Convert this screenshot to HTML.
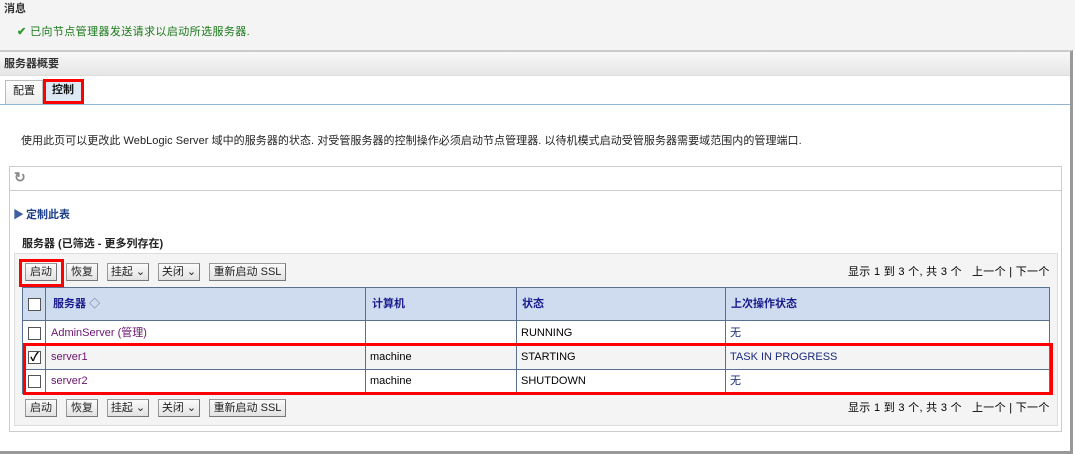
<!DOCTYPE html>
<html><head><meta charset="utf-8"><style>
*{margin:0;padding:0;box-sizing:border-box}
body{width:1075px;height:454px;position:relative;background:#fff;font-family:"Liberation Sans","Noto Sans CJK SC",sans-serif;font-size:11px;line-height:13px;color:#000;overflow:hidden}
.a{position:absolute;white-space:nowrap}
.btn{position:absolute;height:18px;border:1px solid #999;border-right-color:#777;border-bottom-color:#777;background:linear-gradient(#fbfbfb,#e2e2e2);font-size:11px;line-height:16px;text-align:center;color:#222}
.red{position:absolute;border:3px solid #f00}
.th{position:absolute;color:#1a1a8c;font-weight:bold;font-size:11px}
.cb{position:absolute;width:13px;height:13px;border:1px solid #555;background:#fff}
.lnk{color:#6a1470}
.pg{position:absolute;font-size:11px;color:#000;white-space:nowrap;letter-spacing:0.3px}
</style></head><body>
<div class="a" style="left:0;top:0;width:1075px;height:50px;background:#f4f4f4"></div>
<div class="a" style="left:4px;top:3px;color:#333;font-weight:bold">消息</div>
<div class="a" style="left:17px;top:26px;color:#1a7a1a;font-size:11px;letter-spacing:0.4px"><span style="color:#2a9a2a;font-weight:bold">✔</span> 已向节点管理器发送请求以启动所选服务器.</div>
<div class="a" style="left:0;top:50px;width:1073px;height:404px;border-top:2px solid #ccc;border-right:3px solid #999;border-bottom:3px solid #999"></div>
<div class="a" style="left:0;top:52px;width:1070px;height:24px;background:linear-gradient(#f8f8f8,#e6e6e6);border-bottom:1px solid #ddd"></div>
<div class="a" style="left:4px;top:58px;font-weight:bold;color:#333">服务器概要</div>
<div class="a" style="left:5px;top:80px;width:38px;height:24px;border:1px solid #bbb;border-bottom:none;background:linear-gradient(#fff,#eee)"></div>
<div class="a" style="left:13px;top:85px;color:#222">配置</div>
<div class="a" style="left:43px;top:79px;width:41px;height:25px;background:#dce8f3"></div>
<div class="a" style="left:52px;top:84px;font-weight:bold;color:#111">控制</div>
<div class="red" style="left:43px;top:79px;width:41px;height:25px"></div>
<div class="a" style="left:0;top:104px;width:1070px;height:1px;background:#8fb4d6"></div>
<div class="a" style="left:21px;top:135px;color:#222;letter-spacing:0.05px">使用此页可以更改此 WebLogic Server 域中的服务器的状态. 对受管服务器的控制操作必须启动节点管理器. 以待机模式启动受管服务器需要域范围内的管理端口.</div>
<div class="a" style="left:9px;top:166px;width:1053px;height:266px;border:1px solid #ccc"></div>
<div class="a" style="left:9px;top:190px;width:1053px;height:1px;background:#ccc"></div>
<div class="a" style="left:14px;top:171px;font-size:14px;color:#888;font-weight:bold">↻</div>
<div class="a" style="left:13px;top:209px;color:#4060a0">▶</div>
<div class="a" style="left:26px;top:209px;color:#1a3d8c;font-weight:bold">定制此表</div>
<div class="a" style="left:22px;top:238px;font-weight:bold;color:#222">服务器 (已筛选 - 更多列存在)</div>
<div class="a" style="left:14px;top:253px;width:1044px;height:173px;background:#f4f4f4;border:1px solid #ddd"></div>
<div class="btn" style="left:25px;top:263px;width:32px">启动</div>
<div class="btn" style="left:66px;top:263px;width:32px">恢复</div>
<div class="btn" style="left:107px;top:263px;width:42px">挂起 ⌄</div>
<div class="btn" style="left:158px;top:263px;width:42px">关闭 ⌄</div>
<div class="btn" style="left:209px;top:263px;width:77px">重新启动 SSL</div>
<div class="red" style="left:19px;top:259px;width:45px;height:28px"></div>
<div class="pg" style="left:848px;top:266px">显示 1 到 3 个, 共 3 个 &nbsp; 上一个 | 下一个</div>
<div class="a" style="left:22px;top:287px;width:1028px;height:107px;border:1px solid #5a7090;background:#fff"></div>
<div class="a" style="left:23px;top:288px;width:1026px;height:33px;background:#cfdcef;border-bottom:1px solid #5a7090"></div>
<div class="a" style="left:23px;top:345px;width:1026px;height:24px;background:#f4f4f4"></div>
<div class="a" style="left:23px;top:344px;width:1026px;height:1px;background:#5a7090"></div>
<div class="a" style="left:23px;top:369px;width:1026px;height:1px;background:#5a7090"></div>
<div class="a" style="left:45px;top:287px;width:1px;height:107px;background:#5a7090"></div>
<div class="a" style="left:365px;top:287px;width:1px;height:107px;background:#5a7090"></div>
<div class="a" style="left:516px;top:287px;width:1px;height:107px;background:#5a7090"></div>
<div class="a" style="left:725px;top:287px;width:1px;height:107px;background:#5a7090"></div>
<div class="cb" style="left:28px;top:298px"></div>
<div class="th" style="left:53px;top:298px">服务器 <span style="color:#6a7aa0">◇</span></div>
<div class="th" style="left:372px;top:298px">计算机</div>
<div class="th" style="left:522px;top:298px">状态</div>
<div class="th" style="left:731px;top:298px">上次操作状态</div>
<div class="cb" style="left:28px;top:327px"></div>
<div class="a lnk" style="left:51px;top:327px">AdminServer (管理)</div>
<div class="a" style="left:521px;top:327px">RUNNING</div>
<div class="a" style="left:730px;top:327px;color:#1a2a7c">无</div>
<div class="cb" style="left:28px;top:351px;font-size:12px;line-height:10px;text-align:center;font-weight:bold">✓</div>
<div class="a lnk" style="left:51px;top:351px">server1</div>
<div class="a" style="left:370px;top:351px">machine</div>
<div class="a" style="left:521px;top:351px">STARTING</div>
<div class="a" style="left:730px;top:351px;color:#1a2a7c">TASK IN PROGRESS</div>
<div class="cb" style="left:28px;top:375px"></div>
<div class="a lnk" style="left:51px;top:375px">server2</div>
<div class="a" style="left:370px;top:375px">machine</div>
<div class="a" style="left:521px;top:375px">SHUTDOWN</div>
<div class="a" style="left:730px;top:375px;color:#1a2a7c">无</div>
<div class="red" style="left:23px;top:343px;width:1030px;height:52px"></div>
<div class="btn" style="left:25px;top:399px;width:32px">启动</div>
<div class="btn" style="left:66px;top:399px;width:32px">恢复</div>
<div class="btn" style="left:107px;top:399px;width:42px">挂起 ⌄</div>
<div class="btn" style="left:158px;top:399px;width:42px">关闭 ⌄</div>
<div class="btn" style="left:209px;top:399px;width:77px">重新启动 SSL</div>
<div class="pg" style="left:848px;top:402px">显示 1 到 3 个, 共 3 个 &nbsp; 上一个 | 下一个</div>
</body></html>
